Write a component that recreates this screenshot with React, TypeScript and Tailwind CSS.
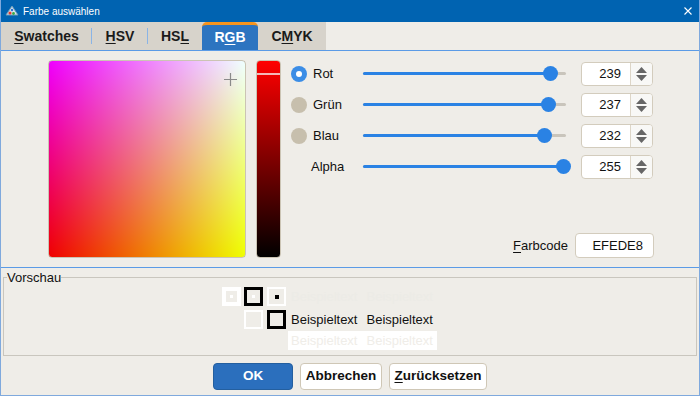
import React from 'react';

const font = "font-['Liberation_Sans',Arial,sans-serif]";

const channels = [
  { label: 'Rot', value: 239, radio: 'on' },
  { label: 'Grün', value: 237, radio: 'off' },
  { label: 'Blau', value: 232, radio: 'off' },
  { label: 'Alpha', value: 255, radio: null },
];

function Mn({ children }: { children: React.ReactNode }) {
  return <span className="underline decoration-1 underline-offset-2">{children}</span>;
}

function Slider({ value }: { value: number }) {
  const pos = (value / 255) * 200;
  return (
    <div className="relative h-[16px] w-[203px] shrink-0">
      <div className="absolute left-0 right-0 top-[6px] h-[3px] rounded-full bg-[#c9c5bc]" />
      <div className="absolute left-0 top-[6px] h-[3px] rounded-full bg-[#2a82e4]" style={{ width: pos }} />
      <div
        className="absolute top-[0px] h-[15px] w-[15px] rounded-full bg-[#2a82e4]"
        style={{ left: pos - 7.5 }}
      />
    </div>
  );
}

function Spinner({ value }: { value: number }) {
  return (
    <div className="ml-[15px] flex h-[24px] w-[72px] shrink-0 overflow-hidden rounded-[4px] border border-[#d3ccbd] bg-white">
      <div className="flex flex-1 items-center justify-end pr-[9px] text-[13px] text-[#111]">{value}</div>
      <div className="flex w-[22px] flex-col items-center justify-center gap-[2px] border-l border-[#ddd6c8] bg-[#f8f8f6]">
        <svg width="11" height="6" viewBox="0 0 11 6">
          <path d="M5.5 0 L11 6 L0 6 Z" fill="#666" />
        </svg>
        <svg width="11" height="6" viewBox="0 0 11 6">
          <path d="M0 0 L11 0 L5.5 6 Z" fill="#666" />
        </svg>
      </div>
    </div>
  );
}

function ChannelRow({ label, value, radio }: { label: string; value: number; radio: string | null }) {
  return (
    <div className="flex h-[31px] items-center">
      <div className="ml-[10px] flex h-[16px] w-[16px] shrink-0 items-center justify-center">
        {radio === 'on' && (
          <div className="flex h-[16px] w-[16px] items-center justify-center rounded-full bg-[#3b8de6]">
            <div className="h-[6px] w-[6px] rounded-full bg-white" />
          </div>
        )}
        {radio === 'off' && <div className="h-[16px] w-[16px] rounded-full bg-[#c7bfad]" />}
      </div>
      <div className={radio ? 'ml-[6px] w-[50px] text-[13px] text-[#111]' : 'ml-[4px] w-[52px] text-[13px] text-[#111]'}>
        {label}
      </div>
      <Slider value={value} />
      <Spinner value={value} />
    </div>
  );
}

const tabs = [
  { pre: '', mn: 'S', post: 'watches', w: 'w-[91px]', sep: true },
  { pre: '', mn: 'H', post: 'SV', w: 'w-[56px]', sep: true },
  { pre: 'HS', mn: 'L', post: '', w: 'w-[54px]', sep: false },
  { pre: 'R', mn: 'G', post: 'B', w: 'w-[56px]', sep: false, active: true },
  { pre: 'C', mn: 'M', post: 'YK', w: 'w-[68px]', sep: false },
];

export default function App() {
  return (
    <div className={`${font} flex h-[396px] w-[700px] flex-col overflow-hidden border-x border-b border-[#7fa9dd] bg-[#efede8]`}>
      {/* title bar */}
      <div className="-mx-px flex h-[22px] shrink-0 items-center bg-[#0063b1] pl-[5px] pr-[8px]">
        <svg width="14" height="14" viewBox="0 0 14 14">
          <path d="M1 11 L7 2 L13 11 Z" fill="#d7e6ef" stroke="#6c9bb8" strokeWidth="1" />
          <circle cx="5" cy="9" r="1.6" fill="#e23a2e" />
          <circle cx="8.5" cy="9.5" r="1.4" fill="#3aa845" />
          <circle cx="7" cy="6" r="1.2" fill="#2d6fd0" />
        </svg>
        <span className="ml-[4px] text-[10px] text-white">Farbe auswählen</span>
        <div className="flex-1" />
        <svg width="8" height="8" viewBox="0 0 8 8">
          <path d="M0.5 0.5 L7.5 7.5 M7.5 0.5 L0.5 7.5" stroke="#fff" strokeWidth="1.1" />
        </svg>
      </div>

      {/* tabs */}
      <div className="flex h-[28px] shrink-0">
        <div className="flex bg-[#d7d3cb]">
          {tabs.map((t, i) => (
            <div key={i} className="relative flex">
              <div
                className={
                  t.active
                    ? `${t.w} flex items-center justify-center rounded-t-[5px] border-t-[3px] border-[#f7941d] bg-[#2c74c0] text-[14px] font-bold text-white`
                    : `${t.w} flex items-center justify-center text-[14px] font-bold text-[#1a1a1a]`
                }
              >
                <span>
                  {t.pre}
                  <Mn>{t.mn}</Mn>
                  {t.post}
                </span>
              </div>
              {t.sep && <div className="absolute right-0 top-[6px] h-[16px] w-px bg-[#8ab4e6]" />}
            </div>
          ))}
        </div>
      </div>

      {/* RGB panel */}
      <div className="flex h-[218px] shrink-0 border-y border-[#5b9be6]">
        <div className="flex pl-[47px] pt-[9px]">
          <div className="relative h-[198px] w-[198px] rounded-[4px] border border-[#cbc4b4] bg-[linear-gradient(to_top,#000000,#0000ff),linear-gradient(to_right,#ef0000,#efff00)] bg-blend-screen">
            <svg className="absolute left-[175px] top-[12px]" width="13" height="13" viewBox="0 0 13 13">
              <path d="M6.5 0 V13 M0 6.5 H13" stroke="#8a8a8a" strokeWidth="1.2" />
            </svg>
          </div>
          <div className="relative ml-[10px] h-[198px] w-[25px] overflow-hidden rounded-[4px] border border-[#cbc4b4] bg-[linear-gradient(to_bottom,#ff0000,#000000)]">
            <div className="absolute left-0 right-0 top-[12px] h-[2px] bg-[#f3b8b8]" />
          </div>
        </div>
        <div className="flex flex-1 flex-col pb-[9px] pt-[7px]">
          {channels.map((c) => (
            <ChannelRow key={c.label} label={c.label} value={c.value} radio={c.radio} />
          ))}
          <div className="flex-1" />
          <div className="flex items-center justify-end pr-[45px]">
            <span className="text-[13px] text-[#111]">
              <Mn>F</Mn>arbcode
            </span>
            <div className="ml-[7px] flex h-[25px] w-[79px] items-center justify-end rounded-[4px] border border-[#d3ccbd] bg-white pr-[10px] text-[13px] text-[#111]">
              EFEDE8
            </div>
          </div>
        </div>
      </div>

      {/* preview */}
      <fieldset className="mx-[2px] mt-[2px] h-[86px] shrink-0 border border-[#c9c6be]">
        <legend className="ml-[3px] text-[13px] leading-[15px] text-[#111]">Vorschau</legend>
        <div className="flex flex-col pl-[218px]">
          <div className="mt-[2px] flex h-[19px] items-center">
            <div className="flex h-[19px] w-[19px] items-center justify-center bg-white">
              <div className="flex h-[11px] w-[11px] items-center justify-center bg-[#efede8]">
                <div className="h-[3px] w-[3px] bg-white" />
              </div>
            </div>
            <div className="ml-[3px] flex h-[19px] w-[19px] items-center justify-center border-[3px] border-black bg-[#efede8]">
              <div className="h-[3px] w-[3px] bg-white" />
            </div>
            <div className="ml-[4px] flex h-[19px] w-[19px] items-center justify-center border-[2px] border-white bg-[#efede8]">
              <div className="h-[4px] w-[4px] bg-black" />
            </div>
            <span className="ml-[5px] text-[13px] text-[#ecebe6]">Beispieltext</span>
            <span className="ml-[9px] text-[13px] text-[#ecebe6]">Beispieltext</span>
          </div>
          <div className="ml-[22px] mt-[4px] flex h-[19px] items-center">
            <div className="flex h-[19px] w-[19px] items-center justify-center bg-white">
              <div className="h-[15px] w-[15px] bg-[#efede8]" />
            </div>
            <div className="ml-[4px] h-[19px] w-[19px] border-[3px] border-black bg-[#efede8]" />
            <span className="ml-[5px] text-[13px] text-[#111]">Beispieltext</span>
            <span className="ml-[9px] text-[13px] text-[#111]">Beispieltext</span>
          </div>
          <div className="ml-[66px] mt-[2px] flex h-[19px] w-[149px] items-center bg-white px-[3px]">
            <span className="text-[13px] text-[#efede8]">Beispieltext</span>
            <span className="ml-[9px] text-[13px] text-[#efede8]">Beispieltext</span>
          </div>
        </div>
      </fieldset>

      {/* buttons */}
      <div className="mt-[7px] flex gap-[7px] pl-[212px]">
        <button className="h-[27px] w-[80px] rounded-[4px] border border-[#245f9f] bg-[#2b6fbd] text-[13.5px] font-bold text-white">
          OK
        </button>
        <button className="h-[27px] w-[82px] rounded-[4px] border border-[#cfc7b6] bg-white text-[13.5px] font-bold text-[#111]">
          Abbrechen
        </button>
        <button className="h-[27px] w-[98px] rounded-[4px] border border-[#cfc7b6] bg-white text-[13.5px] font-bold text-[#111]">
          <Mn>Z</Mn>urücksetzen
        </button>
      </div>
    </div>
  );
}
